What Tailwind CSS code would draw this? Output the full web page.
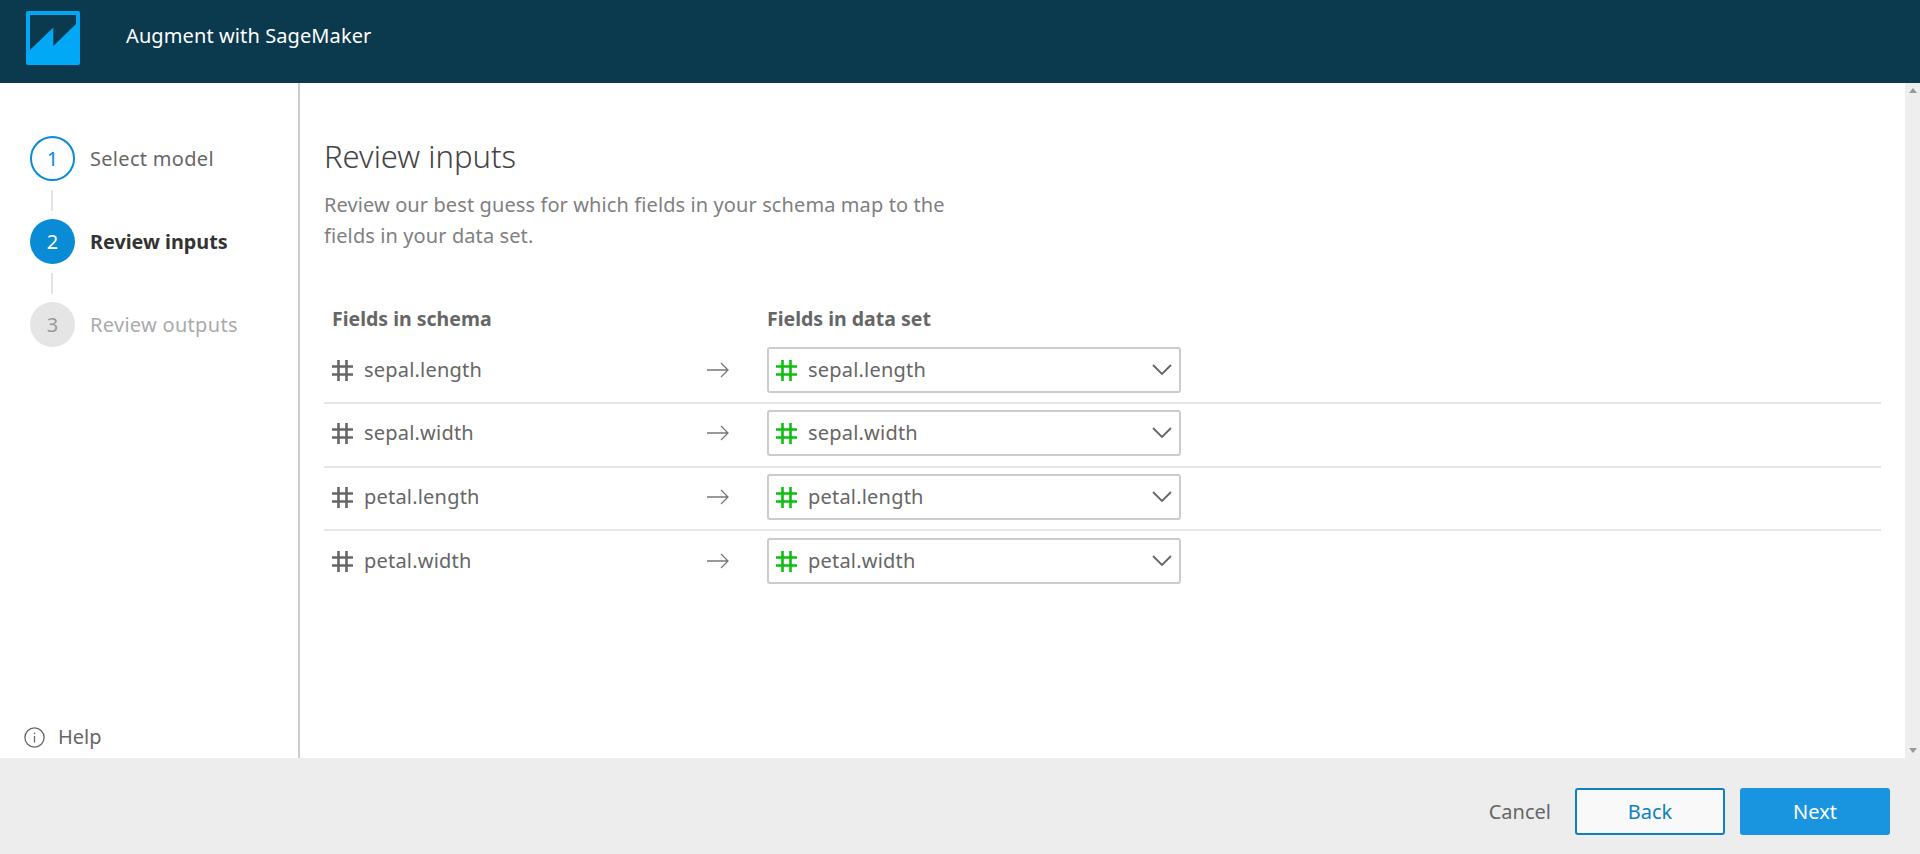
<!DOCTYPE html>
<html lang="en">
<head>
  <meta charset="UTF-8" />
  <title>Augment with SageMaker</title>
  <script src="https://cdn.jsdelivr.net/npm/@tailwindcss/browser@4"></script>
</head>
<body class="h-[854px] overflow-hidden flex flex-col bg-white text-[#666] font-['Noto_Sans','Open_Sans',sans-serif] text-[20px]">
  <header class="h-[83px] shrink-0 bg-[#0b3a4f] flex items-center">
    <svg class="ml-[26px] w-[54px] h-[54px] -mt-[7px]" viewBox="0 0 54 54">
      <rect width="54" height="54" rx="2" fill="#00a8f5" />
      <path d="M4 4H50V13L27.3 35V16.5L4 39Z" fill="#0b3a4f" />
    </svg>
    <span class="ml-[46px] -mt-[11px] text-white tracking-[0.1px]">Augment with SageMaker</span>
  </header>

  <div class="flex flex-1 min-h-0">
    <aside class="w-[300px] shrink-0 border-r-2 border-[#ccc] flex flex-col justify-between">
      <ol class="pl-[30px] pt-[53px]">
        <li class="flex items-center gap-[15px] h-[45px]">
          <span class="w-[45px] h-[45px] rounded-full border-2 border-[#0a8bd6] text-[#0a8bd6] flex items-center justify-center">1</span>
          <span class="tracking-[0.3px]">Select model</span>
        </li>
        <li class="w-px h-[21px] ml-[21px] mt-[9px] mb-[8px] border-l-2 border-[#e3e3e3]"></li>
        <li class="flex items-center gap-[15px] h-[45px]">
          <span class="w-[45px] h-[45px] rounded-full bg-[#0a8bd6] text-white flex items-center justify-center">2</span>
          <span class="font-bold text-[#333] text-[19.8px]">Review inputs</span>
        </li>
        <li class="w-px h-[21px] ml-[21px] mt-[9px] mb-[8px] border-l-2 border-[#e3e3e3]"></li>
        <li class="flex items-center gap-[15px] h-[45px]">
          <span class="w-[45px] h-[45px] rounded-full bg-[#e5e5e5] text-[#999] flex items-center justify-center">3</span>
          <span class="text-[#aaa] tracking-[0.3px]">Review outputs</span>
        </li>
      </ol>
      <div class="flex items-center gap-[13px] pl-[24px] pb-[6px]">
        <svg class="w-[21px] h-[21px]" viewBox="0 0 21 21" fill="none" stroke="#666" stroke-width="1.3">
          <circle cx="10.5" cy="10.5" r="9.6" />
          <path d="M10.5 9V15.5M10.5 5.5V7.2" />
        </svg>
        <span>Help</span>
      </div>
    </aside>

    <main class="flex-1 pl-[24px] pr-[24px] pt-[53px]">
      <h1 class="text-[31px] leading-[40px] font-light text-[#444]">Review inputs</h1>
      <p class="mt-[14px] w-[640px] leading-[30.6px] text-[#808080] tracking-[0.1px]">Review our best guess for which fields in your schema map to the fields in your data set.</p>

      <div class="mt-[49px] flex h-[36px] items-center font-bold pl-[8px] text-[19.5px]">
        <span class="w-[435px]">Fields in schema</span>
        <span>Fields in data set</span>
      </div>

      <div class="mt-[5px] tracking-[0.2px]">
        <div class="flex items-center h-[63px] pt-[6px] pb-[9px] pl-[8px] border-b-2 border-[#e6e6e6]">
          <svg class="w-[21px] h-[21px] shrink-0" viewBox="0 0 21 21" fill="none" stroke="#666" stroke-width="2.6"><path d="M6.5 0V21M14.5 0V21M0 6.5H21M0 14.5H21" /></svg>
          <span class="ml-[11px] w-[343px]">sepal.length</span>
          <svg class="w-[22px] h-[16px] shrink-0" viewBox="0 0 22 16" fill="none" stroke="#777" stroke-width="1.3"><path d="M0 8H21M14 1L21 8L14 15" /></svg>
          <div class="ml-[38px] w-[414px] h-[46px] border-2 border-[#ccc] rounded-[3px] flex items-center pl-[7px] pr-[7px]">
            <svg class="w-[21px] h-[21px] shrink-0" viewBox="0 0 21 21" fill="none" stroke="#0cbf0c" stroke-width="2.6"><path d="M6.5 0V21M14.5 0V21M0 6.5H21M0 14.5H21" /></svg>
            <span class="ml-[11px] flex-1">sepal.length</span>
            <svg class="w-[20px] h-[12px] shrink-0" viewBox="0 0 20 12" fill="none" stroke="#666" stroke-width="1.8"><path d="M1 1L10 10L19 1" /></svg>
          </div>
        </div>
        <div class="flex items-center h-[64px] pt-[6px] pb-[10px] pl-[8px] border-b-2 border-[#e6e6e6]">
          <svg class="w-[21px] h-[21px] shrink-0" viewBox="0 0 21 21" fill="none" stroke="#666" stroke-width="2.6"><path d="M6.5 0V21M14.5 0V21M0 6.5H21M0 14.5H21" /></svg>
          <span class="ml-[11px] w-[343px]">sepal.width</span>
          <svg class="w-[22px] h-[16px] shrink-0" viewBox="0 0 22 16" fill="none" stroke="#777" stroke-width="1.3"><path d="M0 8H21M14 1L21 8L14 15" /></svg>
          <div class="ml-[38px] w-[414px] h-[46px] border-2 border-[#ccc] rounded-[3px] flex items-center pl-[7px] pr-[7px]">
            <svg class="w-[21px] h-[21px] shrink-0" viewBox="0 0 21 21" fill="none" stroke="#0cbf0c" stroke-width="2.6"><path d="M6.5 0V21M14.5 0V21M0 6.5H21M0 14.5H21" /></svg>
            <span class="ml-[11px] flex-1">sepal.width</span>
            <svg class="w-[20px] h-[12px] shrink-0" viewBox="0 0 20 12" fill="none" stroke="#666" stroke-width="1.8"><path d="M1 1L10 10L19 1" /></svg>
          </div>
        </div>
        <div class="flex items-center h-[63px] pt-[6px] pb-[9px] pl-[8px] border-b-2 border-[#e6e6e6]">
          <svg class="w-[21px] h-[21px] shrink-0" viewBox="0 0 21 21" fill="none" stroke="#666" stroke-width="2.6"><path d="M6.5 0V21M14.5 0V21M0 6.5H21M0 14.5H21" /></svg>
          <span class="ml-[11px] w-[343px]">petal.length</span>
          <svg class="w-[22px] h-[16px] shrink-0" viewBox="0 0 22 16" fill="none" stroke="#777" stroke-width="1.3"><path d="M0 8H21M14 1L21 8L14 15" /></svg>
          <div class="ml-[38px] w-[414px] h-[46px] border-2 border-[#ccc] rounded-[3px] flex items-center pl-[7px] pr-[7px]">
            <svg class="w-[21px] h-[21px] shrink-0" viewBox="0 0 21 21" fill="none" stroke="#0cbf0c" stroke-width="2.6"><path d="M6.5 0V21M14.5 0V21M0 6.5H21M0 14.5H21" /></svg>
            <span class="ml-[11px] flex-1">petal.length</span>
            <svg class="w-[20px] h-[12px] shrink-0" viewBox="0 0 20 12" fill="none" stroke="#666" stroke-width="1.8"><path d="M1 1L10 10L19 1" /></svg>
          </div>
        </div>
        <div class="flex items-center h-[63px] pt-[6px] pb-[9px] pl-[8px]">
          <svg class="w-[21px] h-[21px] shrink-0" viewBox="0 0 21 21" fill="none" stroke="#666" stroke-width="2.6"><path d="M6.5 0V21M14.5 0V21M0 6.5H21M0 14.5H21" /></svg>
          <span class="ml-[11px] w-[343px]">petal.width</span>
          <svg class="w-[22px] h-[16px] shrink-0" viewBox="0 0 22 16" fill="none" stroke="#777" stroke-width="1.3"><path d="M0 8H21M14 1L21 8L14 15" /></svg>
          <div class="ml-[38px] w-[414px] h-[46px] border-2 border-[#ccc] rounded-[3px] flex items-center pl-[7px] pr-[7px]">
            <svg class="w-[21px] h-[21px] shrink-0" viewBox="0 0 21 21" fill="none" stroke="#0cbf0c" stroke-width="2.6"><path d="M6.5 0V21M14.5 0V21M0 6.5H21M0 14.5H21" /></svg>
            <span class="ml-[11px] flex-1">petal.width</span>
            <svg class="w-[20px] h-[12px] shrink-0" viewBox="0 0 20 12" fill="none" stroke="#666" stroke-width="1.8"><path d="M1 1L10 10L19 1" /></svg>
          </div>
        </div>
      </div>
    </main>

    <div class="w-[15px] shrink-0 bg-[#eee] flex flex-col justify-between items-center py-[5px]">
      <svg class="w-[8px] h-[5px]" viewBox="0 0 8 5"><path d="M4 0L8 5H0Z" fill="#999" /></svg>
      <svg class="w-[8px] h-[5px]" viewBox="0 0 8 5"><path d="M0 0H8L4 5Z" fill="#999" /></svg>
    </div>
  </div>

  <footer class="h-[96px] shrink-0 bg-[#ededed] flex items-center justify-end pr-[30px] pt-[11px]">
    <span class="mr-[24px]">Cancel</span>
    <button class="w-[150px] h-[47px] mr-[15px] bg-[#f9f9f9] border-2 border-[#0f7fc0] rounded-[3px] text-[#0f7fc0]">Back</button>
    <button class="w-[150px] h-[47px] bg-[#1995e0] rounded-[3px] text-white">Next</button>
  </footer>
</body>
</html>
